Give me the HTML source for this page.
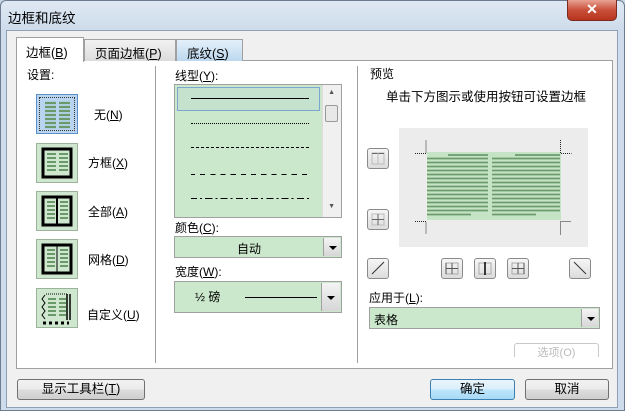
<!DOCTYPE html>
<html><head><meta charset="utf-8"><style>
*{margin:0;padding:0;box-sizing:border-box}
body{width:625px;height:411px;overflow:hidden;background:#c9d6e4;font-family:"Liberation Sans","Noto Sans CJK SC",sans-serif;font-size:12px;color:#000;position:relative}
.a{position:absolute}
.frame{left:0;top:0;width:625px;height:411px;background:linear-gradient(#dfe9f4,#cddbea 30px,#cddbea);border:1px solid #6d7d8f;border-radius:6px 6px 0 0}
.inner{left:6px;top:30px;width:612px;height:378px;background:#f0f0f0;border:1px solid #8da0b5}
.panel{left:16px;top:60px;width:597px;height:309px;background:#fff;border:1px solid #a0a0a0}
.tab{top:39px;height:22px;border:1px solid #a0a0a0;border-bottom:none;background:linear-gradient(#f2f2f2,#dcdcdc);font-size:12.5px;padding:3px 0 0 10px}
.ico{width:42px;height:40px;background:#cfe6cf;border:1px solid #9ab39a}
.btn{border:1px solid #707070;border-radius:3px;background:linear-gradient(#f2f2f2,#ebebeb 50%,#dddddd 50%,#cfcfcf);text-align:center;font-size:12.5px}
.sb{width:22px;height:21px;border:1px solid #8a8a8a;border-radius:3px;background:linear-gradient(#f6f6f6,#dcdcdc)}
.combo{background:#cce8cc;border:1px solid #a0a0a0}
.dd{position:absolute;right:1px;top:1px;bottom:1px;width:17px;background:linear-gradient(#f4f4f4,#d6d6d6);border-left:1px solid #a0a0a0}
.dd:after{content:"";position:absolute;left:5px;top:45%;border:4px solid transparent;border-top:4px solid #000;border-bottom:none}
.ln{position:absolute;left:16px;width:118px}
</style></head><body>
<div class="a frame"></div>
<div class="a" style="left:8px;top:7px;font-size:13.5px">边框和底纹</div>
<div class="a" style="left:567px;top:0;width:50px;height:21px;border:1px solid #7a2a20;border-top:none;border-radius:0 0 5px 5px;background:linear-gradient(#e8a293,#c9503a 50%,#b8341c);color:#fff;font-weight:bold;text-align:center;font-size:14px;line-height:19px">✕</div>
<div class="a inner"></div>
<div class="a panel"></div>
<div class="a tab" style="left:84px;width:92px">页面边框(<u>P</u>)</div>
<div class="a tab" style="left:176px;width:67px;background:linear-gradient(#e4f0fa,#bcd8ef)">底纹(<u>S</u>)</div>
<div class="a tab" style="left:16px;top:37px;width:68px;height:25px;background:#fff;padding-left:9px;padding-top:4px">边框(<u>B</u>)</div>
<div class="a" style="left:27px;top:66px">设置:</div>
<div class="a" style="left:155px;top:66px;width:1px;height:297px;background:#a0a0a0"></div>
<div class="a" style="left:357px;top:66px;width:1px;height:297px;background:#a0a0a0"></div>

<div class="a ico" style="left:36px;top:94px;background:#b8d4ee;border:1px solid #5b8fc7;outline:1px dotted #333;outline-offset:-4px">
<svg width="40" height="38"><g stroke="#6a9a6a" stroke-width="2.2">
<path d="M8 8h11M22 8h11M8 12h11M22 12h11M8 16h11M22 16h11M8 20h11M22 20h11M8 24h11M22 24h11M8 28h11M22 28h11M8 32h11M22 32h11"/></g></svg></div>
<div class="a" style="left:94px;top:106px">无(<u>N</u>)</div>
<div class="a ico" style="left:36px;top:143px"><svg width="40" height="38"><rect x="6" y="5" width="28" height="28" fill="none" stroke="#000" stroke-width="3"/><g stroke="#6a9a6a" stroke-width="2"><path d="M10 10h9M22 10h9M10 14h9M22 14h9M10 18h9M22 18h9M10 22h9M22 22h9M10 26h9M22 26h9"/></g></svg></div>
<div class="a" style="left:88px;top:154px">方框(<u>X</u>)</div>
<div class="a ico" style="left:36px;top:191px"><svg width="40" height="38"><rect x="6" y="5" width="28" height="28" fill="none" stroke="#000" stroke-width="3"/><path d="M20 5v28" stroke="#000" stroke-width="2"/><g stroke="#6a9a6a" stroke-width="2"><path d="M10 10h8M23 10h8M10 14h8M23 14h8M10 18h8M23 18h8M10 22h8M23 22h8M10 26h8M23 26h8"/></g></svg></div>
<div class="a" style="left:88px;top:203px">全部(<u>A</u>)</div>
<div class="a ico" style="left:36px;top:239px"><svg width="40" height="38"><rect x="6" y="5" width="28" height="28" fill="none" stroke="#000" stroke-width="3"/><path d="M20 5v28" stroke="#000" stroke-width="1"/><g stroke="#6a9a6a" stroke-width="2"><path d="M10 10h8M23 10h8M10 14h8M23 14h8M10 18h8M23 18h8M10 22h8M23 22h8M10 26h8M23 26h8"/></g></svg></div>
<div class="a" style="left:88px;top:251px">网格(<u>D</u>)</div>
<div class="a ico" style="left:36px;top:288px"><svg width="40" height="38"><path d="M33 5v26M30 5v26" stroke="#000" stroke-width="1.5"/><path d="M8 6l-3 4 3 4-3 4 3 4-3 4 3 4" fill="none" stroke="#000"/><path d="M6 34h26" stroke="#000" stroke-width="3" stroke-dasharray="3 3"/><path d="M9 5h22" stroke="#000" stroke-dasharray="1 1"/><g stroke="#6a9a6a" stroke-width="2"><path d="M11 10h8M22 10h7M11 14h8M22 14h7M11 18h8M22 18h7M11 22h8M22 22h7M11 26h8M22 26h7"/></g></svg></div>
<div class="a" style="left:87px;top:306px">自定义(<u>U</u>)</div>

<div class="a" style="left:175px;top:67px">线型(<u>Y</u>):</div>
<div class="a combo" style="left:174px;top:84px;width:168px;height:134px">
<div class="a" style="left:2px;top:2px;width:143px;height:24px;border:1px solid #7aa6d0;background:#c5e2cf"></div>
<div class="ln" style="top:13px;border-top:1px solid #000"></div>
<div class="ln" style="top:38px;border-top:1px dotted #000"></div>
<div class="ln" style="top:62px;border-top:1px dashed #000"></div>
<div class="ln" style="top:89px;border-top:1px dashed #000;border-image:repeating-linear-gradient(90deg,#000 0 5px,transparent 5px 10px) 1"></div>
<div class="ln" style="top:113px;border-top:1px solid #000;border-image:repeating-linear-gradient(90deg,#000 0 7px,transparent 7px 10px,#000 10px 12px,transparent 12px 15px) 1"></div>
<div class="a" style="right:0;top:0;width:19px;height:132px;background:#f0f0f0;border-left:1px solid #ddd"></div>
<div class="a" style="right:6px;top:4px;font-size:7px;color:#555">▲</div>
<div class="a" style="right:3px;top:20px;width:13px;height:17px;border:1px solid #999;border-radius:2px;background:#e8e8e8"></div>
<div class="a" style="right:6px;top:118px;font-size:7px;color:#555">▼</div>
</div>
<div class="a" style="left:175px;top:219px">颜色(<u>C</u>):</div>
<div class="a combo" style="left:174px;top:236px;width:168px;height:22px"><div class="a" style="left:62px;top:3px">自动</div><div class="dd"></div></div>
<div class="a" style="left:175px;top:263px">宽度(<u>W</u>):</div>
<div class="a combo" style="left:174px;top:281px;width:168px;height:32px"><div class="a" style="left:20px;top:6px">½ 磅</div><div class="a" style="left:70px;top:15px;width:72px;border-top:1px solid #000"></div><div class="dd" style="width:19px"></div></div>

<div class="a" style="left:370px;top:65px">预览</div>
<div class="a" style="left:386px;top:86px;font-size:12.5px">单击下方图示或使用按钮可设置边框</div>
<div class="a" style="left:399px;top:128px;width:189px;height:119px;background:#ececec"></div>
<div class="a" style="left:427px;top:152px;width:134px;height:68px;background:#c5e3c5"></div>
<svg class="a" style="left:399px;top:128px" width="189" height="119">
<g stroke="#6c9c6c" stroke-width="1.8"><path d="M49 27h40M116 27h45"/></g>
<g stroke="#6c9c6c" stroke-width="1.8"><path d="M28 30.5h61M93 30.5h68M28 34.5h61M93 34.5h68M28 38.5h61M93 38.5h68M28 42.5h61M93 42.5h68M28 46.5h61M93 46.5h68M28 50.5h61M93 50.5h68M28 54.5h61M93 54.5h68M28 58.5h61M93 58.5h68M28 62.5h61M93 62.5h68M28 66.5h61M93 66.5h68M28 70.5h61M93 70.5h68M28 74.5h61M93 74.5h68M28 78.5h61M93 78.5h68M28 82.5h61M93 82.5h68M28 86.5h44M93 86.5h44"/></g>
<g stroke="#222" stroke-dasharray="1 1" fill="none"><path d="M16 25.5h11V12M161.5 12v13.5h11M16 93.5h11v13M161.5 106.5V93.5h11"/></g></svg>
<div class="a sb" style="left:367px;top:148px"><svg width="20" height="19"><rect x="4" y="4" width="12" height="11" fill="none" stroke="#bbb"/><path d="M4 4.5h12" stroke="#666"/><path d="M10 4v11" stroke="#bbb"/></svg></div>
<div class="a sb" style="left:367px;top:209px"><svg width="20" height="19"><rect x="4" y="4" width="12" height="11" fill="none" stroke="#bbb"/><path d="M4 9.5h12M10 4v11" stroke="#666"/></svg></div>
<div class="a sb" style="left:367px;top:258px"><svg width="20" height="19"><path d="M4 15L16 3" stroke="#333"/></svg></div>
<div class="a sb" style="left:441px;top:258px"><svg width="20" height="19"><rect x="4" y="4" width="12" height="11" fill="none" stroke="#aaa"/><path d="M4 4v11M4 9.5h12M10 4v11" stroke="#555"/></svg></div>
<div class="a sb" style="left:474px;top:258px"><svg width="20" height="19"><rect x="4" y="4" width="12" height="11" fill="none" stroke="#aaa"/><path d="M10 3v13" stroke="#000" stroke-width="1.5"/></svg></div>
<div class="a sb" style="left:507px;top:258px"><svg width="20" height="19"><rect x="4" y="4" width="12" height="11" fill="none" stroke="#aaa"/><path d="M16 4v11M4 9.5h12M10 4v11" stroke="#555"/></svg></div>
<div class="a sb" style="left:569px;top:258px"><svg width="20" height="19"><path d="M4 3L16 15" stroke="#333"/></svg></div>
<div class="a" style="left:369px;top:289px">应用于(<u>L</u>):</div>
<div class="a combo" style="left:369px;top:307px;width:231px;height:22px"><div class="a" style="left:4px;top:3px">表格</div><div class="dd"></div></div>
<div class="a" style="left:514px;top:343px;width:85px;height:14px;border:1px solid #c8c8c8;border-bottom:none;border-radius:3px 3px 0 0;color:#bbb;font-size:11px;text-align:center">选项(O)</div>

<div class="a btn" style="left:17px;top:379px;width:128px;height:21px;line-height:19px">显示工具栏(<u>T</u>)</div>
<div class="a btn" style="left:430px;top:379px;width:85px;height:21px;line-height:19px;border-color:#3c7fb1;background:linear-gradient(#eaf5fc,#d9eefa 50%,#bee6fd 50%,#a7d9f5)">确定</div>
<div class="a btn" style="left:525px;top:379px;width:84px;height:21px;line-height:19px">取消</div>
</body></html>
